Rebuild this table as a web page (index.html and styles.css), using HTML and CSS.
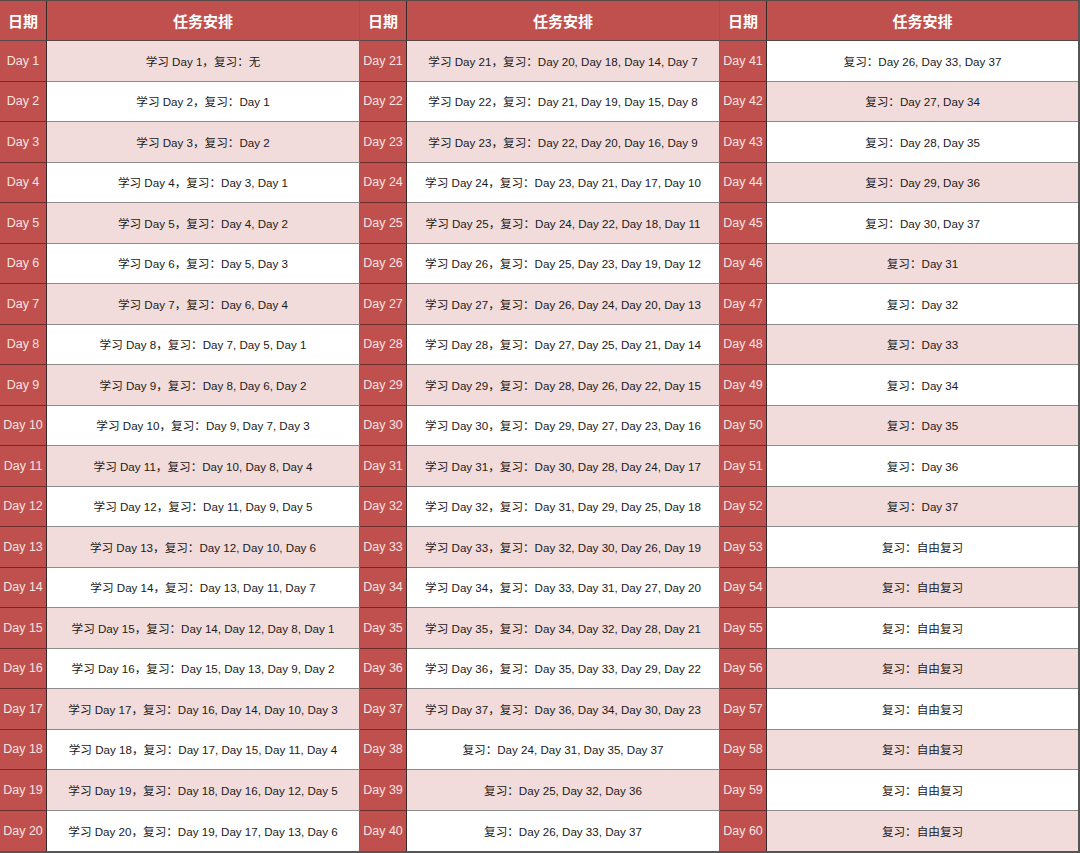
FILE: index.html
```html
<!DOCTYPE html>
<html lang="zh">
<head>
<meta charset="utf-8">
<title>复习计划</title>
<link rel="stylesheet" href="styles.css">
</head>
<body>
<div class="sheet">
  <div class="c h d">日期</div><div class="c h t">任务安排</div><div class="c h d">日期</div><div class="c h t">任务安排</div><div class="c h d">日期</div><div class="c h t last">任务安排</div>

  <div class="c d">Day 1</div><div class="c t p">学习 Day 1，复习：无</div><div class="c d">Day 21</div><div class="c t p">学习 Day 21，复习：Day 20, Day 18, Day 14, Day 7</div><div class="c d">Day 41</div><div class="c t last">复习：Day 26, Day 33, Day 37</div>
  <div class="c d">Day 2</div><div class="c t">学习 Day 2，复习：Day 1</div><div class="c d">Day 22</div><div class="c t">学习 Day 22，复习：Day 21, Day 19, Day 15, Day 8</div><div class="c d">Day 42</div><div class="c t p last">复习：Day 27, Day 34</div>
  <div class="c d">Day 3</div><div class="c t p">学习 Day 3，复习：Day 2</div><div class="c d">Day 23</div><div class="c t p">学习 Day 23，复习：Day 22, Day 20, Day 16, Day 9</div><div class="c d">Day 43</div><div class="c t last">复习：Day 28, Day 35</div>
  <div class="c d">Day 4</div><div class="c t">学习 Day 4，复习：Day 3, Day 1</div><div class="c d">Day 24</div><div class="c t">学习 Day 24，复习：Day 23, Day 21, Day 17, Day 10</div><div class="c d">Day 44</div><div class="c t p last">复习：Day 29, Day 36</div>
  <div class="c d">Day 5</div><div class="c t p">学习 Day 5，复习：Day 4, Day 2</div><div class="c d">Day 25</div><div class="c t p">学习 Day 25，复习：Day 24, Day 22, Day 18, Day 11</div><div class="c d">Day 45</div><div class="c t last">复习：Day 30, Day 37</div>
  <div class="c d">Day 6</div><div class="c t">学习 Day 6，复习：Day 5, Day 3</div><div class="c d">Day 26</div><div class="c t">学习 Day 26，复习：Day 25, Day 23, Day 19, Day 12</div><div class="c d">Day 46</div><div class="c t p last">复习：Day 31</div>
  <div class="c d">Day 7</div><div class="c t p">学习 Day 7，复习：Day 6, Day 4</div><div class="c d">Day 27</div><div class="c t p">学习 Day 27，复习：Day 26, Day 24, Day 20, Day 13</div><div class="c d">Day 47</div><div class="c t last">复习：Day 32</div>
  <div class="c d">Day 8</div><div class="c t">学习 Day 8，复习：Day 7, Day 5, Day 1</div><div class="c d">Day 28</div><div class="c t">学习 Day 28，复习：Day 27, Day 25, Day 21, Day 14</div><div class="c d">Day 48</div><div class="c t p last">复习：Day 33</div>
  <div class="c d">Day 9</div><div class="c t p">学习 Day 9，复习：Day 8, Day 6, Day 2</div><div class="c d">Day 29</div><div class="c t p">学习 Day 29，复习：Day 28, Day 26, Day 22, Day 15</div><div class="c d">Day 49</div><div class="c t last">复习：Day 34</div>
  <div class="c d">Day 10</div><div class="c t">学习 Day 10，复习：Day 9, Day 7, Day 3</div><div class="c d">Day 30</div><div class="c t">学习 Day 30，复习：Day 29, Day 27, Day 23, Day 16</div><div class="c d">Day 50</div><div class="c t p last">复习：Day 35</div>
  <div class="c d">Day 11</div><div class="c t p">学习 Day 11，复习：Day 10, Day 8, Day 4</div><div class="c d">Day 31</div><div class="c t p">学习 Day 31，复习：Day 30, Day 28, Day 24, Day 17</div><div class="c d">Day 51</div><div class="c t last">复习：Day 36</div>
  <div class="c d">Day 12</div><div class="c t">学习 Day 12，复习：Day 11, Day 9, Day 5</div><div class="c d">Day 32</div><div class="c t">学习 Day 32，复习：Day 31, Day 29, Day 25, Day 18</div><div class="c d">Day 52</div><div class="c t p last">复习：Day 37</div>
  <div class="c d">Day 13</div><div class="c t p">学习 Day 13，复习：Day 12, Day 10, Day 6</div><div class="c d">Day 33</div><div class="c t p">学习 Day 33，复习：Day 32, Day 30, Day 26, Day 19</div><div class="c d">Day 53</div><div class="c t last">复习：自由复习</div>
  <div class="c d">Day 14</div><div class="c t">学习 Day 14，复习：Day 13, Day 11, Day 7</div><div class="c d">Day 34</div><div class="c t">学习 Day 34，复习：Day 33, Day 31, Day 27, Day 20</div><div class="c d">Day 54</div><div class="c t p last">复习：自由复习</div>
  <div class="c d">Day 15</div><div class="c t p">学习 Day 15，复习：Day 14, Day 12, Day 8, Day 1</div><div class="c d">Day 35</div><div class="c t p">学习 Day 35，复习：Day 34, Day 32, Day 28, Day 21</div><div class="c d">Day 55</div><div class="c t last">复习：自由复习</div>
  <div class="c d">Day 16</div><div class="c t">学习 Day 16，复习：Day 15, Day 13, Day 9, Day 2</div><div class="c d">Day 36</div><div class="c t">学习 Day 36，复习：Day 35, Day 33, Day 29, Day 22</div><div class="c d">Day 56</div><div class="c t p last">复习：自由复习</div>
  <div class="c d">Day 17</div><div class="c t p">学习 Day 17，复习：Day 16, Day 14, Day 10, Day 3</div><div class="c d">Day 37</div><div class="c t p">学习 Day 37，复习：Day 36, Day 34, Day 30, Day 23</div><div class="c d">Day 57</div><div class="c t last">复习：自由复习</div>
  <div class="c d">Day 18</div><div class="c t">学习 Day 18，复习：Day 17, Day 15, Day 11, Day 4</div><div class="c d">Day 38</div><div class="c t">复习：Day 24, Day 31, Day 35, Day 37</div><div class="c d">Day 58</div><div class="c t p last">复习：自由复习</div>
  <div class="c d">Day 19</div><div class="c t p">学习 Day 19，复习：Day 18, Day 16, Day 12, Day 5</div><div class="c d">Day 39</div><div class="c t p">复习：Day 25, Day 32, Day 36</div><div class="c d">Day 59</div><div class="c t last">复习：自由复习</div>
  <div class="c d b">Day 20</div><div class="c t b">学习 Day 20，复习：Day 19, Day 17, Day 13, Day 6</div><div class="c d b">Day 40</div><div class="c t b">复习：Day 26, Day 33, Day 37</div><div class="c d b">Day 60</div><div class="c t p last b">复习：自由复习</div>
</div>
</body>
</html>
```

FILE: styles.css
```css
html, body {
  margin: 0;
  padding: 0;
  background: #ffffff;
}

.sheet {
  box-sizing: border-box;
  width: 1080px;
  height: 853px;
  display: grid;
  grid-template-columns: 47px 313px 47px 313px 47px 1fr;
  grid-template-rows: 40px repeat(20, 1fr);
  border-top: 1px solid #5c4a4a;
  border-right: 2px solid #555555;
  border-bottom: 2px solid #555555;
  font-family: "Liberation Sans", Arial, "Noto Sans CJK SC", sans-serif;
  font-size: 11.6px;
  color: #1a1a1a;
}

.c {
  box-sizing: border-box;
  display: flex;
  align-items: center;
  justify-content: center;
  white-space: nowrap;
  overflow: hidden;
}

.d {
  background: #c0504d;
  color: #f7e4e3;
  font-size: 12.5px;
  border-right: 1px solid #3a2a2a;
  border-bottom: 1px solid #6e2c2a;
}

.t {
  background: #ffffff;
  border-right: 1px solid #6a6a6a;
  border-bottom: 1px solid #8c8c8c;
}

.t.p {
  background: #f2dcdb;
}

.t.last {
  border-right: none;
}

.h {
  background: #c0504d;
  color: #ffffff;
  font-size: 15px;
  font-weight: bold;
  border-bottom: 1px solid #5a4646;
}

.b {
  border-bottom: none;
}
```
